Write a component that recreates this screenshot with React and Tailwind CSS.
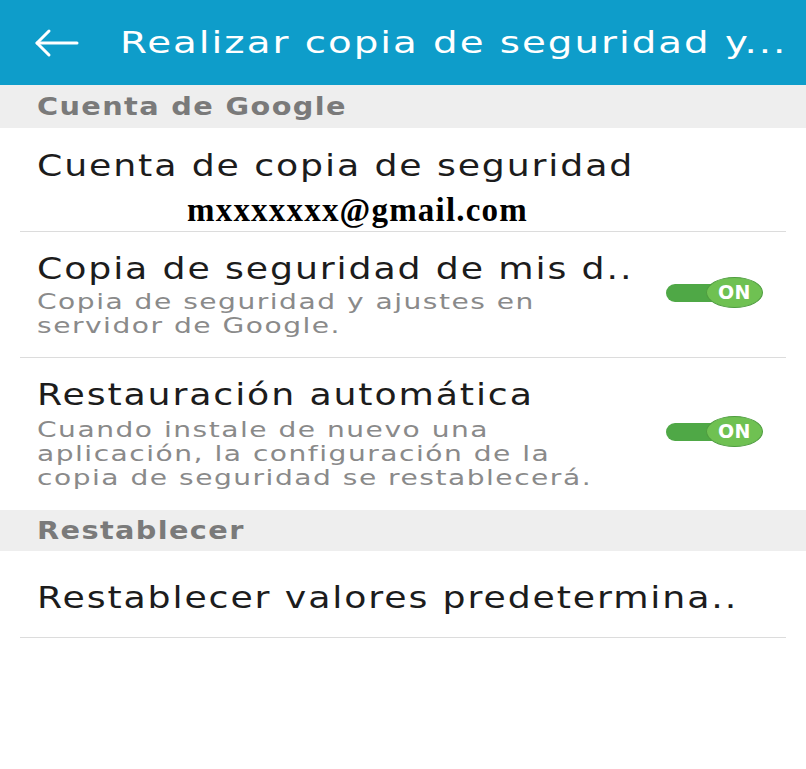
import React from 'react';

const title = "inline-block origin-left scale-x-[1.17] whitespace-nowrap text-[31px] leading-[40px] text-[#1c1c1c] tracking-[1.6px]";
const subLine = "block origin-left scale-x-[1.37] whitespace-nowrap text-[20.5px] leading-[24px] h-[24px] text-[#8a8a8a] tracking-[1.1px]";

function Toggle() {
    return (
        <div className="relative w-[97px] h-[32px] shrink-0">
            <div className="absolute left-0 top-[7px] w-[70px] h-[18px] rounded-full bg-[#4fa846]" />
            <div className="absolute right-0 top-0 w-[57px] h-[31px] rounded-[50%] bg-[#6fc152] border border-[#4f9d40] flex items-center justify-center">
                <span className="text-white font-bold text-[19px] leading-none tracking-[0.5px]">ON</span>
            </div>
        </div>
    );
}

function SectionHeader({ label, height }) {
    return (
        <div className={`bg-[#eeeeee] flex items-center pl-[37px] ${height}`}>
            <span className="inline-block origin-left scale-x-[1.15] text-[25px] font-bold text-[#7a7a7a] tracking-[1.2px]">{label}</span>
        </div>
    );
}

function Subtitle({ lines, className = "" }) {
    return (
        <div className={className}>
            {lines.map(l => (
                <span key={l} className={subLine}>{l}</span>
            ))}
        </div>
    );
}

export default function App() {
    return (
        <div className="w-[806px] h-[769px] bg-white overflow-hidden" style={{ fontFamily: '"DejaVu Sans", sans-serif' }}>
            {/* Top bar */}
            <header className="h-[85px] bg-[#0e9dca] flex items-center">
                <svg width="46" height="30" viewBox="0 0 46 30" className="ml-[33px] shrink-0" fill="none" stroke="white" strokeWidth="3" strokeLinecap="round" strokeLinejoin="round">
                    <path d="M44 15 H4" />
                    <path d="M16 3 L4 15 L16 27" />
                </svg>
                <h1 className="ml-[41px] inline-block origin-left scale-x-[1.25] text-white text-[31px] leading-none tracking-[1.6px] whitespace-nowrap">Realizar copia de seguridad y...</h1>
            </header>

            <SectionHeader label="Cuenta de Google" height="h-[43px]" />

            <div className="mx-[20px] border-b border-[#dcdcdc] pl-[17px] pt-[17px] pb-[3px]">
                <div className={title}>Cuenta de copia de seguridad</div>
                <div className="mt-[7px] pl-[150px] text-[33px] leading-[36px] font-bold text-black tracking-[1.2px]" style={{ fontFamily: '"Liberation Serif", serif' }}>mxxxxxxx@gmail.com</div>
            </div>

            <div className="mx-[20px] border-b border-[#dcdcdc] pl-[17px] pr-[23px] pt-[16px] pb-[19px] flex items-center justify-between">
                <div className="flex flex-col items-start">
                    <div className={title}>Copia de seguridad de mis d..</div>
                    <Subtitle className="mt-[2px]" lines={["Copia de seguridad y ajustes en", "servidor de Google."]} />
                </div>
                <Toggle />
            </div>

            <div className="mx-[20px] pl-[17px] pr-[23px] pt-[16px] pb-[20px] flex items-center justify-between">
                <div className="flex flex-col items-start">
                    <div className={title}>Restauración automática</div>
                    <Subtitle className="mt-[4px]" lines={["Cuando instale de nuevo una", "aplicación, la configuración de la", "copia de seguridad se restablecerá."]} />
                </div>
                <Toggle />
            </div>

            <SectionHeader label="Restablecer" height="h-[41px]" />

            <div className="mx-[20px] border-b border-[#dcdcdc] pl-[17px] pt-[26px] pb-[20px]">
                <div className={title}>Restablecer valores predetermina..</div>
            </div>
        </div>
    );
}
